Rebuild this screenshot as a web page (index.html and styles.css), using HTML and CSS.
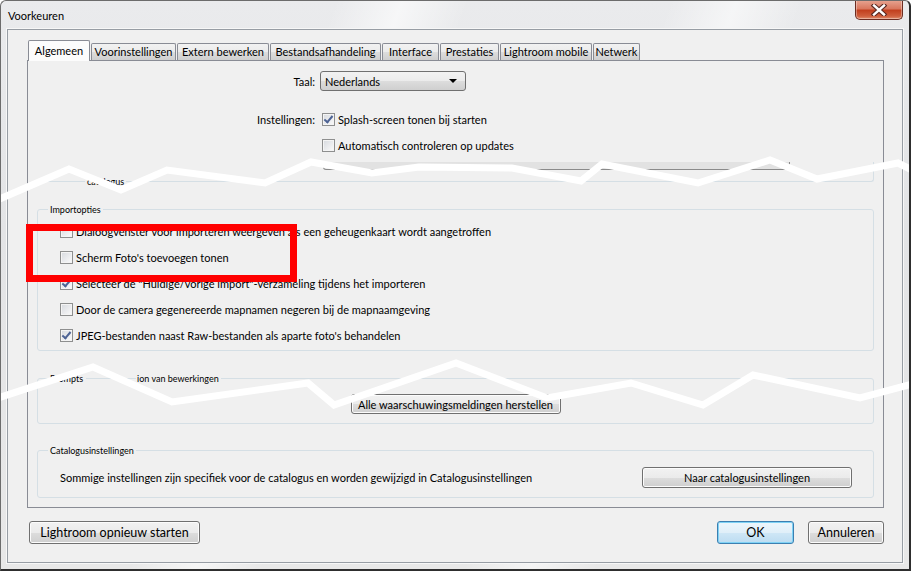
FILE: index.html
```html
<!DOCTYPE html>
<html lang="nl">
<head>
    <meta charset="UTF-8">
    <title>Voorkeuren</title>
    <link rel="stylesheet" href="styles.css">
</head>
<body>
<div class="window">
    <div class="titlebar">
        <span class="title">Voorkeuren</span>
        <div class="close-btn">
            <svg width="18" height="12" viewBox="0 0 18 12">
                <path d="M4 1.5 L14 10.5 M14 1.5 L4 10.5" stroke="#5b2a22" stroke-width="4.6" stroke-linecap="square"/>
                <path d="M4 1.5 L14 10.5 M14 1.5 L4 10.5" stroke="#ffffff" stroke-width="2.4" stroke-linecap="square"/>
            </svg>
        </div>
    </div>

    <div class="client">
        <div class="tabs">
            <div class="tab active w-algemeen">Algemeen</div>
            <div class="tab w-voor">Voorinstellingen</div>
            <div class="tab w-extern">Extern bewerken</div>
            <div class="tab w-bestand">Bestandsafhandeling</div>
            <div class="tab w-interface">Interface</div>
            <div class="tab w-prestaties">Prestaties</div>
            <div class="tab w-mobile">Lightroom mobile</div>
            <div class="tab w-netwerk">Netwerk</div>
        </div>

        <div class="panel">
            <div class="form-row taal-row">
                <span class="lbl">Taal:</span>
                <div class="combo">
                    <span>Nederlands</span>
                    <span class="arrow"></span>
                </div>
            </div>

            <div class="form-row check-row first-check">
                <span class="lbl">Instellingen:</span>
                <span class="box checked"></span>
                <span>Splash-screen tonen bij starten</span>
            </div>
            <div class="form-row check-row">
                <span class="lbl"></span>
                <span class="box"></span>
                <span>Automatisch controleren op updates</span>
            </div>

            <div class="cat-stub">
                <span class="cat-caption">catalogus</span>
                <span class="combo-stub"></span>
            </div>

            <fieldset class="group import">
                <legend>Importopties</legend>
                <div class="opt"><span class="box"></span>Dialoogvenster voor importeren weergeven als een geheugenkaart wordt aangetroffen</div>
                <div class="opt"><span class="box"></span>Scherm Foto's toevoegen tonen</div>
                <div class="opt"><span class="box checked"></span>Selecteer de "Huidige/vorige import"-verzameling tijdens het importeren</div>
                <div class="opt"><span class="box"></span>Door de camera gegenereerde mapnamen negeren bij de mapnaamgeving</div>
                <div class="opt"><span class="box checked"></span>JPEG-bestanden naast Raw-bestanden als aparte foto's behandelen</div>
            </fieldset>

            <fieldset class="group prompts">
                <legend>
                    <span>Prompts</span>
                    <span class="legend-line"></span>
                    <span>ion van bewerkingen</span>
                </legend>
                <div class="center-row">
                    <button class="btn reset-btn">Alle waarschuwingsmeldingen herstellen</button>
                </div>
            </fieldset>

            <fieldset class="group catalog">
                <legend>Catalogusinstellingen</legend>
                <div class="catalog-row">
                    <span>Sommige instellingen zijn specifiek voor de catalogus en worden gewijzigd in Catalogusinstellingen</span>
                    <button class="btn cat-btn">Naar catalogusinstellingen</button>
                </div>
            </fieldset>
        </div>

        <div class="footer">
            <button class="btn restart-btn">Lightroom opnieuw starten</button>
            <div class="footer-right">
                <button class="btn ok-btn">OK</button>
                <button class="btn cancel-btn">Annuleren</button>
            </div>
        </div>
    </div>

    <!-- torn-paper overlay and the highlight frame -->
    <svg class="tear" width="911" height="571" viewBox="0 0 911 571">
        <polyline points="-5,201 69,169 121,190 167,170 265,183 311,162 372,173 419,167 512,168 581,181 602,164 698,183 770,160 817,179 898,163 916,172" />
        <polyline points="-5,399 93,367 172,402 308,383 334,405 456,363 547,398 631,383 703,405 753,375 860,398 916,383" />
    </svg>
    <div class="highlight"></div>
</div>
</body>
</html>
```

FILE: styles.css
```css
* {
    box-sizing: border-box;
}
body {
    margin: 0;
    font-family: Lato, "Open Sans", sans-serif;
    font-size: 11px;
    color: #000;
    background: #fff;
}

/* window frame */
.window {
    position: relative;
    width: 911px;
    height: 571px;
    display: flex;
    flex-direction: column;
    padding: 0 6px 6px 6px;
    border: 1px solid #6c6c6c;
    border-right: 2px solid #2e2e2e;
    border-bottom: 2px solid #2e2e2e;
    border-radius: 6px 6px 0 0;
    overflow: hidden;
    background:
        linear-gradient(110deg, rgba(255,255,255,0) 30%, rgba(255,255,255,0.6) 36%, rgba(255,255,255,0) 42%,
                        rgba(255,255,255,0) 60%, rgba(255,255,255,0.55) 66%, rgba(255,255,255,0) 72%),
        linear-gradient(180deg, #eaebed, #e3e4e6 40%, #e8e8e8);
}
.titlebar {
    height: 28px;
    display: flex;
    align-items: center;
    flex-shrink: 0;
}
.title {
    font-size: 11px;
    margin-left: 1px;
    padding-top: 1px;
    color: #000;
}
.close-btn {
    margin-left: auto;
    align-self: flex-start;
    margin-top: -1px;
    width: 48px;
    height: 20px;
    display: flex;
    align-items: center;
    justify-content: center;
    border: 1px solid #6b2d22;
    border-top: none;
    border-radius: 0 0 5px 5px;
    background: linear-gradient(180deg, #e8a693 0%, #d9785f 45%, #c2401f 55%, #cf5f3d 85%, #e08f70 100%);
    box-shadow: inset 0 0 0 1px rgba(255,255,255,0.35);
}

/* client area */
.client {
    flex: 1;
    display: flex;
    flex-direction: column;
    background: #f0f0f0;
    border: 1px solid #979da4;
    box-shadow: 0 0 0 1px #f7f7f7;
    padding: 10px 18px 0 19px;
}

/* tabs */
.tabs {
    display: flex;
    align-items: flex-end;
    height: 21px;
    padding-left: 1px;
    position: relative;
    z-index: 1;
}
.tab {
    height: 17px;
    margin-bottom: 1px;
    margin-right: 1px;
    border: 1px solid #898c95;
    border-bottom: none;
    border-radius: 2px 2px 0 0;
    background: linear-gradient(180deg, #f2f2f2, #ebebeb 50%, #dddddd 51%, #cfcfcf);
    line-height: 15px;
    text-align: center;
    white-space: nowrap;
}
.tab.active {
    height: 21px;
    margin-bottom: 0;
    background: #fcfcfc;
    line-height: 19px;
}
.w-algemeen { width: 62px; }
.w-voor { width: 85px; }
.w-extern { width: 92px; }
.w-bestand { width: 111px; }
.w-interface { width: 57px; }
.w-prestaties { width: 59px; }
.w-mobile { width: 92px; }
.w-netwerk { width: 47px; }

.panel {
    height: 448px;
    margin-top: -1px;
    border: 1px solid #898c95;
    background: #f0f0f0;
    padding: 0 9px;
    display: flex;
    flex-direction: column;
}

/* top form */
.form-row {
    display: flex;
    align-items: center;
}
.lbl {
    width: 287px;
    margin-left: -9px;
    margin-right: 5px;
    text-align: right;
}
.taal-row {
    margin-top: 10px;
    height: 20px;
}
.combo {
    width: 146px;
    height: 20px;
    border: 1px solid #707070;
    border-radius: 3px;
    background: linear-gradient(180deg, #f2f2f2, #ebebeb 50%, #dddddd 51%, #cfcfcf);
    display: flex;
    align-items: center;
    padding: 0 8px 0 4px;
}
.arrow {
    margin-left: auto;
    width: 0;
    height: 0;
    border-left: 4px solid transparent;
    border-right: 4px solid transparent;
    border-top: 4px solid #000;
}
.check-row {
    height: 26px;
}
.first-check {
    margin-top: 15px;
}
.check-row .box {
    margin-left: 2px;
    margin-right: 3px;
}

.box {
    width: 13px;
    height: 13px;
    flex-shrink: 0;
    border: 1px solid #8e8f8f;
    background: linear-gradient(135deg, #d6d9de, #fbfbfb);
    box-shadow: inset 0 0 0 1px #f4f4f4;
    position: relative;
}
.box.checked::after {
    content: "";
    position: absolute;
    left: 3px;
    top: 0px;
    width: 3px;
    height: 7px;
    border-right: 2px solid #4d6394;
    border-bottom: 2px solid #4d6394;
    transform: rotate(40deg);
}

/* torn catalogue remnant */
.cat-stub {
    margin-top: 4px;
    height: 20px;
    display: flex;
    align-items: flex-start;
    border-right: 1px solid #d5dfe5;
    border-bottom: 1px solid #d5dfe5;
    border-radius: 0 0 3px 0;
}
.cat-caption {
    align-self: flex-end;
    margin: 0 0 -7px 48px;
    padding: 0 2px;
    background: #f0f0f0;
    font-size: 9px;
    line-height: 13px;
}
.combo-stub {
    margin-left: 197px;
    width: 467px;
    height: 8px;
    border: 1px solid #8a8a8a;
    border-top: none;
    border-radius: 0 0 3px 3px;
    background: #e2e2e2;
}

/* group boxes */
.group {
    margin: 0;
    padding: 0 22px 0 22px;
    border: 1px solid #d5dfe5;
    border-radius: 3px;
    min-width: 0;
}
.group legend {
    margin-left: -12px;
    padding: 0 2px;
    font-size: 9px;
    line-height: 13px;
}
.import {
    margin-top: 21px;
    padding-top: 2px;
    padding-bottom: 2px;
}
.opt {
    height: 26px;
    display: flex;
    align-items: center;
    white-space: nowrap;
}
.opt .box {
    margin-right: 3px;
}

.prompts {
    margin-top: 21px;
    padding-bottom: 9px;
}
.prompts legend {
    display: flex;
    align-items: center;
}
.legend-line {
    width: 50px;
    height: 1px;
    margin: 0 1px 0 3px;
    background: #d5dfe5;
}
.center-row {
    display: flex;
    justify-content: center;
    padding-top: 9px;
}

.catalog {
    margin-top: 20px;
    padding-left: 22px;
    padding-right: 21px;
    padding-bottom: 9px;
}
.catalog-row {
    display: flex;
    align-items: center;
    justify-content: space-between;
    padding-top: 10px;
}

/* buttons */
.btn {
    font-family: Lato, "Open Sans", sans-serif;
    font-size: 11px;
    color: #000;
    height: 21px;
    padding: 0 6px;
    border: 1px solid #707070;
    border-radius: 3px;
    background: linear-gradient(180deg, #f2f2f2, #ebebeb 50%, #dddddd 51%, #cfcfcf);
    box-shadow: inset 0 0 0 1px #fcfcfc;
    white-space: nowrap;
}
.reset-btn {
    width: 210px;
    height: 20px;
}
.cat-btn {
    width: 210px;
    height: 21px;
}

.footer {
    margin-top: 13px;
    display: flex;
    align-items: center;
    padding-left: 2px;
}
.footer .btn {
    height: 23px;
    font-size: 12.5px;
}
.restart-btn {
    width: 171px;
}
.footer-right {
    margin-left: auto;
    display: flex;
    gap: 14px;
}
.ok-btn {
    width: 77px;
    border-color: #3c7fb1;
    background: linear-gradient(180deg, #edf6fc, #e0eff9 50%, #cfe7f6 51%, #bcdcf1);
    box-shadow: inset 0 0 0 1px #7fd2f5;
}
.cancel-btn {
    width: 76px;
}

/* overlays */
.tear {
    position: absolute;
    left: -1px;
    top: -1px;
    pointer-events: none;
}
.tear polyline {
    fill: none;
    stroke: #ffffff;
    stroke-width: 7;
    stroke-linejoin: miter;
}
.highlight {
    position: absolute;
    left: 25px;
    top: 223px;
    width: 271px;
    height: 58px;
    border: 7px solid #ff0000;
}
```
